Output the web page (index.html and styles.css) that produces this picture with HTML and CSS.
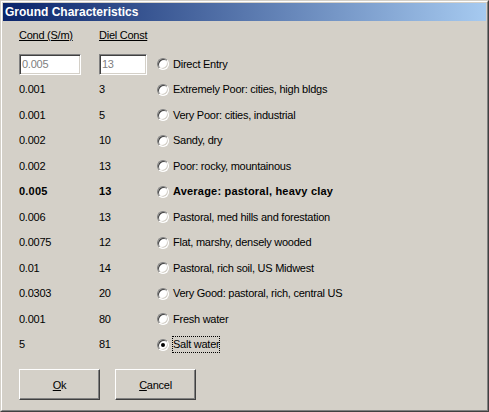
FILE: index.html
```html
<!DOCTYPE html>
<html lang="en">

<head>
    <meta charset="UTF-8">
    <title>Ground Characteristics</title>
    <link rel="stylesheet" href="styles.css">
</head>

<body>
    <div class="window">
        <div class="frame">
            <div class="title-bar">Ground Characteristics</div>
            <div class="client">
                <div class="grid">
                    <div class="head">Cond (S/m)</div>
                    <div class="head">Diel Const</div>
                    <div></div>

                    <div><input class="edit edit-cond" value="0.005" readonly></div>
                    <div><input class="edit edit-diel" value="13" readonly></div>
                    <div class="opt"><span class="radio"></span><span class="txt">Direct Entry</span></div>

                    <div>0.001</div>
                    <div>3</div>
                    <div class="opt"><span class="radio"></span><span class="txt">Extremely Poor: cities, high bldgs</span></div>

                    <div>0.001</div>
                    <div>5</div>
                    <div class="opt"><span class="radio"></span><span class="txt">Very Poor: cities, industrial</span></div>

                    <div>0.002</div>
                    <div>10</div>
                    <div class="opt"><span class="radio"></span><span class="txt">Sandy, dry</span></div>

                    <div>0.002</div>
                    <div>13</div>
                    <div class="opt"><span class="radio"></span><span class="txt">Poor: rocky, mountainous</span></div>

                    <div class="bold">0.005</div>
                    <div class="bold">13</div>
                    <div class="opt bold"><span class="radio"></span><span class="txt">Average: pastoral, heavy clay</span></div>

                    <div>0.006</div>
                    <div>13</div>
                    <div class="opt"><span class="radio"></span><span class="txt">Pastoral, med hills and forestation</span></div>

                    <div>0.0075</div>
                    <div>12</div>
                    <div class="opt"><span class="radio"></span><span class="txt">Flat, marshy, densely wooded</span></div>

                    <div>0.01</div>
                    <div>14</div>
                    <div class="opt"><span class="radio"></span><span class="txt">Pastoral, rich soil, US Midwest</span></div>

                    <div>0.0303</div>
                    <div>20</div>
                    <div class="opt"><span class="radio"></span><span class="txt">Very Good: pastoral, rich, central US</span></div>

                    <div>0.001</div>
                    <div>80</div>
                    <div class="opt"><span class="radio"></span><span class="txt">Fresh water</span></div>

                    <div>5</div>
                    <div>81</div>
                    <div class="opt"><span class="radio checked"></span><span class="txt focus">Salt water</span></div>
                </div>
                <div class="buttons">
                    <button class="btn"><u>O</u>k</button>
                    <button class="btn"><u>C</u>ancel</button>
                </div>
            </div>
        </div>
    </div>
</body>

</html>
```

FILE: styles.css
```css
* {
    margin: 0;
    padding: 0;
    box-sizing: border-box;
}

body {
    background-color: #d4d0c8;
    font-family: "Liberation Sans", Arial, sans-serif;
    font-size: 11px;
    letter-spacing: -0.25px;
    color: #000;
}

.window {
    width: 489px;
    height: 412px;
    border: 1px solid;
    border-color: #d4d0c8 #404040 #404040 #d4d0c8;
}

.frame {
    height: 100%;
    padding: 1px;
    border: 1px solid;
    border-color: #fff #808080 #808080 #fff;
}

.title-bar {
    height: 18px;
    padding-left: 2px;
    line-height: 18px;
    font-size: 12px;
    font-weight: bold;
    letter-spacing: 0;
    color: #fff;
    background: linear-gradient(to right, #0a246a, #a6caf0);
}

.client {
    padding: 5px 0 0 16px;
}

.grid {
    display: grid;
    grid-template-columns: 80px 58px 1fr;
    grid-auto-rows: 25.5px;
    align-items: center;
    line-height: 13px;
}

.head {
    text-decoration: underline;
    align-self: start;
    margin-top: 3px;
}

.edit {
    display: block;
    height: 21px;
    padding: 0 2px;
    font-family: inherit;
    font-size: 11px;
    letter-spacing: -0.25px;
    color: #808080;
    background-color: #fff;
    border: 1px solid;
    border-color: #808080 #fff #fff #808080;
    box-shadow: inset 1px 1px #404040, inset -1px -1px #d4d0c8;
    outline: none;
}

.edit-cond {
    width: 62px;
}

.edit-diel {
    width: 48px;
}

.opt {
    display: flex;
    align-items: center;
}

.radio {
    position: relative;
    width: 12px;
    height: 12px;
    margin-right: 4px;
    border-radius: 50%;
    background-color: #fff;
    border: 1px solid;
    border-color: #808080 #fff #fff #808080;
    box-shadow: inset 1px 1px #404040, inset -1px -1px #d4d0c8;
}

.radio.checked::after {
    content: "";
    position: absolute;
    left: 3px;
    top: 3px;
    width: 4px;
    height: 4px;
    border-radius: 50%;
    background-color: #000;
}

.txt.focus {
    margin-left: -1px;
    padding: 1px 0;
    border: 1px dotted #000;
}

.bold {
    font-weight: bold;
    letter-spacing: 0.2px;
}

.buttons {
    display: flex;
    gap: 15px;
    margin-top: 11.5px;
}

.btn {
    width: 81px;
    height: 31px;
    font-family: inherit;
    font-size: 11px;
    letter-spacing: -0.25px;
    color: #000;
    background-color: #d4d0c8;
    border: 1px solid;
    border-color: #fff #404040 #404040 #fff;
    box-shadow: inset -1px -1px #808080;
}
```
